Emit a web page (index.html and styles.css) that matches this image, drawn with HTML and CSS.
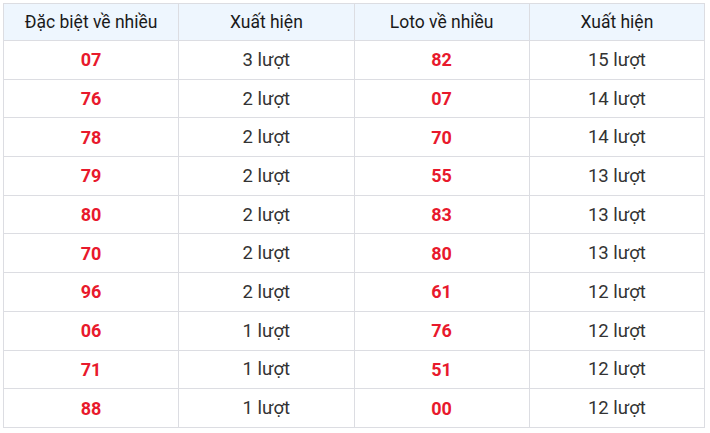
FILE: index.html
```html
<!DOCTYPE html>
<html lang="vi">
<head>
<meta charset="utf-8">
<link rel="stylesheet" href="styles.css">
</head>
<body>
<table class="stats">
  <thead>
    <tr><th>Đặc biệt về nhiều</th><th>Xuất hiện</th><th>Loto về nhiều</th><th>Xuất hiện</th></tr>
  </thead>
  <tbody>
    <tr><td class="num">07</td><td>3 lượt</td><td class="num">82</td><td>15 lượt</td></tr>
    <tr><td class="num">76</td><td>2 lượt</td><td class="num">07</td><td>14 lượt</td></tr>
    <tr><td class="num">78</td><td>2 lượt</td><td class="num">70</td><td>14 lượt</td></tr>
    <tr><td class="num">79</td><td>2 lượt</td><td class="num">55</td><td>13 lượt</td></tr>
    <tr><td class="num">80</td><td>2 lượt</td><td class="num">83</td><td>13 lượt</td></tr>
    <tr><td class="num">70</td><td>2 lượt</td><td class="num">80</td><td>13 lượt</td></tr>
    <tr><td class="num">96</td><td>2 lượt</td><td class="num">61</td><td>12 lượt</td></tr>
    <tr><td class="num">06</td><td>1 lượt</td><td class="num">76</td><td>12 lượt</td></tr>
    <tr><td class="num">71</td><td>1 lượt</td><td class="num">51</td><td>12 lượt</td></tr>
    <tr><td class="num">88</td><td>1 lượt</td><td class="num">00</td><td>12 lượt</td></tr>
  </tbody>
</table>
</body>
</html>
```
FILE: styles.css
```css
html, body {
  margin: 0;
  padding: 0;
  background: #fff;
}
body {
  padding: 3px 6px 0 3px;
  font-family: Roboto, "Liberation Sans", sans-serif;
}
.stats {
  width: 702px;
  border-collapse: collapse;
  table-layout: fixed;
  color: #222;
}
.stats th,
.stats td {
  border: 1px solid #dcdde2;
  text-align: center;
  padding: 0;
}
.stats th {
  height: 36px;
  background: #eef6fe;
  font-weight: 400;
  font-size: 17.5px;
  color: #1a1a1a;
}
.stats td {
  height: 37.7px;
  font-size: 18.5px;
  color: #333;
}
.stats td.num {
  color: #e8192c;
  font-weight: 700;
  font-size: 18px;
}
```
